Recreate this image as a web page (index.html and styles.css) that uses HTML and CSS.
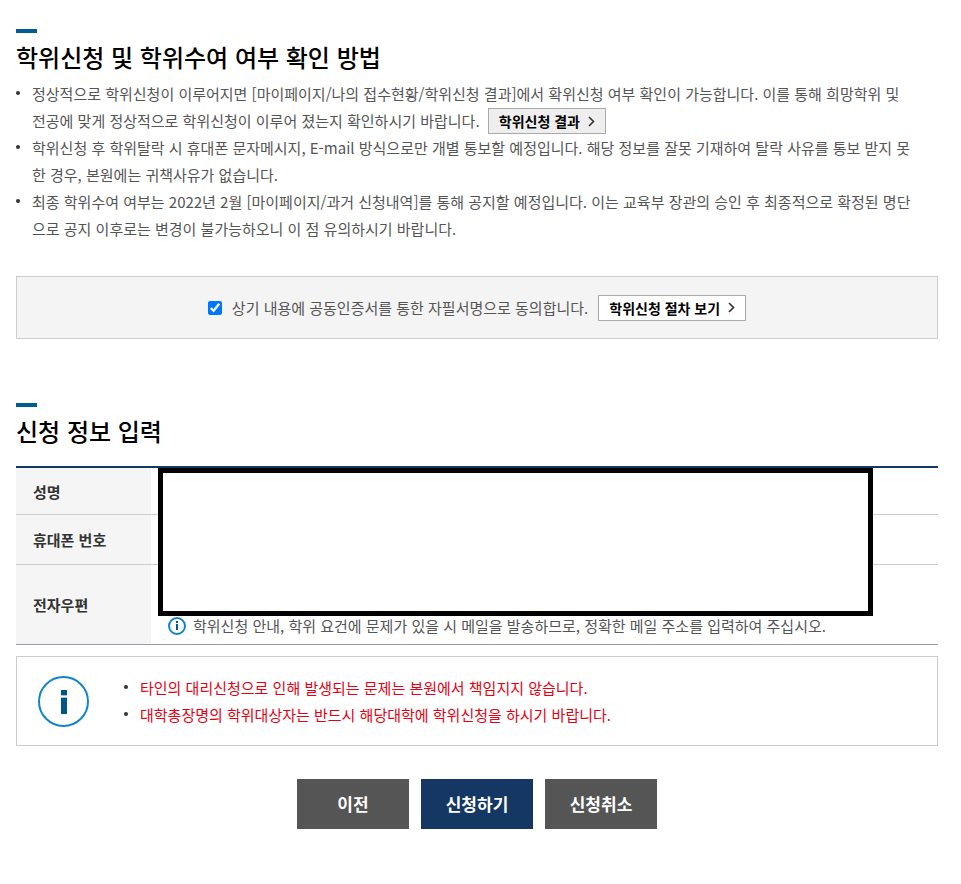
FILE: index.html
```html
<!DOCTYPE html>
<html lang="ko">
<head>
<meta charset="utf-8">
<meta name="viewport" content="width=device-width, initial-scale=1">
<title>학위신청</title>
<link rel="stylesheet" href="styles.css">
</head>
<body>
<main class="page">
  <section class="guide">
    <h2 class="title">학위신청 및 학위수여 여부 확인 방법</h2>
    <ul class="bullets">
      <li>정상적으로 학위신청이 이루어지면 [마이페이지/나의 접수현황/학위신청 결과]에서 확위신청 여부 확인이 가능합니다. 이를 통해 희망학위 및<br>전공에 맞게 정상적으로 학위신청이 이루어 졌는지 확인하시기 바랍니다.
        <a class="link-btn link-btn-gray" href="#">학위신청 결과<svg class="chevron" viewBox="0 0 7 11" aria-hidden="true"><path d="M1 1l4.5 4.5L1 10"/></svg></a></li>
      <li>학위신청 후 학위탈락 시 휴대폰 문자메시지, E-mail 방식으로만 개별 통보할 예정입니다. 해당 정보를 잘못 기재하여 탈락 사유를 통보 받지 못<br>한 경우, 본원에는 귀책사유가 없습니다.</li>
      <li>최종 학위수여 여부는 2022년 2월 [마이페이지/과거 신청내역]를 통해 공지할 예정입니다. 이는 교육부 장관의 승인 후 최종적으로 확정된 명단<br>으로 공지 이후로는 변경이 불가능하오니 이 점 유의하시기 바랍니다.</li>
    </ul>
  </section>

  <div class="agree">
    <input class="agree-check" type="checkbox" id="agree" checked>
    <label class="agree-label" for="agree">상기 내용에 공동인증서를 통한 자필서명으로 동의합니다.</label>
    <a class="link-btn" href="#">학위신청 절차 보기<svg class="chevron" viewBox="0 0 7 11" aria-hidden="true"><path d="M1 1l4.5 4.5L1 10"/></svg></a>
  </div>

  <section class="entry">
    <h2 class="title">신청 정보 입력</h2>
    <div class="table-wrap">
      <table class="info">
        <tbody>
          <tr class="row-name"><th scope="row">성명</th><td></td></tr>
          <tr class="row-phone"><th scope="row">휴대폰 번호</th><td></td></tr>
          <tr class="row-mail"><th scope="row">전자우편</th><td>
            <p class="hint"><svg class="hint-icon" viewBox="0 0 18 18" aria-hidden="true"><circle cx="9" cy="9" r="8"/><path d="M8 4h2v2H8zM8 7h2v6H8z"/></svg>학위신청 안내, 학위 요건에 문제가 있을 시 메일을 발송하므로, 정확한 메일 주소를 입력하여 주십시오.</p>
          </td></tr>
        </tbody>
      </table>
      <div class="mask"></div>
    </div>
    <div class="notice">
      <svg class="notice-icon" viewBox="0 0 51 51" aria-hidden="true"><circle cx="25.5" cy="25.5" r="24.5"/><path d="M23 14h6v5h-6zM23 22h6v16h-6z"/><path class="notice-gap" d="M23 19h6v1h-6zM23 21h6v1h-6z"/></svg>
      <ul class="bullets notice-list">
        <li>타인의 대리신청으로 인해 발생되는 문제는 본원에서 책임지지 않습니다.</li>
        <li>대학총장명의 학위대상자는 반드시 해당대학에 학위신청을 하시기 바랍니다.</li>
      </ul>
    </div>
  </section>

  <div class="actions">
    <button class="action" type="button">이전</button>
    <button class="action action-primary" type="button">신청하기</button>
    <button class="action" type="button">신청취소</button>
  </div>
</main>
</body>
</html>
```
FILE: styles.css
```css
* {
  box-sizing: border-box;
}

body {
  margin: 0;
  background: #fff;
  color: #555;
  font: 400 15px/27px "Noto Sans CJK KR", "Noto Sans", sans-serif;
}

.page {
  padding: 29px 23px 55px 16px;
}

.title {
  margin: 0;
  color: #000;
  font-size: 24px;
  font-weight: 500;
  line-height: 36px;
}

.title::before {
  content: "";
  display: block;
  width: 21px;
  height: 4px;
  margin-bottom: 6px;
  background: #005c92;
}

.bullets {
  margin: 0;
  padding: 0;
  list-style: none;
}

.bullets li {
  position: relative;
  padding-left: 16px;
}

.bullets li::before {
  content: "";
  position: absolute;
  top: 11px;
  left: 0;
  width: 4px;
  height: 4px;
  border-radius: 50%;
  background: #333;
}

.guide .bullets {
  margin-top: 5px;
}

.link-btn {
  display: inline-flex;
  align-items: center;
  gap: 8px;
  height: 26px;
  padding: 0 10px;
  border: 1px solid #aaa;
  background: #fff;
  color: #000;
  font-size: 14px;
  font-weight: 700;
  line-height: 24px;
  text-decoration: none;
}

.link-btn-gray {
  margin: 1px 0 0 4px;
  background: #eee;
  vertical-align: top;
}

.chevron {
  width: 7px;
  height: 11px;
  fill: none;
  stroke: #333;
  stroke-width: 1.6;
}

.agree {
  display: flex;
  align-items: center;
  justify-content: center;
  height: 63px;
  margin-top: 34px;
  border: 1px solid #ccc;
  background: #f4f4f4;
}

.agree-check {
  width: 14px;
  height: 14px;
  margin: 0 10px 0 0;
}

.agree-label {
  margin-right: 10px;
}

.entry {
  margin-top: 64px;
}

.table-wrap {
  position: relative;
  margin-top: 17px;
}

.info {
  width: 100%;
  border-top: 2px solid #143764;
  border-bottom: 1px solid #959ca8;
  border-spacing: 0;
  table-layout: fixed;
}

.info th,
.info td {
  padding: 0 17px;
  border-bottom: 1px solid #ccc;
}

.info th {
  width: 135px;
  background: #f5f5f5;
  color: #333;
  font-weight: 700;
  text-align: left;
}

.row-name {
  height: 47px;
}

.row-phone {
  height: 50px;
}

.row-mail {
  height: 79px;
}

.info .row-mail th,
.info .row-mail td {
  border-bottom: 0;
}

.info .row-mail td {
  vertical-align: bottom;
}

.hint {
  display: flex;
  align-items: center;
  gap: 7px;
  margin: 0 0 5px;
}

.hint-icon {
  flex: none;
  width: 18px;
  height: 18px;
  fill: #005c92;
}

.hint-icon circle {
  fill: none;
  stroke: #1284c7;
  stroke-width: 2;
}

.mask {
  position: absolute;
  top: 2px;
  right: 65px;
  left: 142px;
  height: 148px;
  border: 5px solid #000;
  background: #fff;
}

.notice {
  display: flex;
  align-items: center;
  gap: 35px;
  margin-top: 11px;
  padding: 17px 21px;
  border: 1px solid #ccc;
  line-height: 27px;
}

.notice-icon {
  flex: none;
  width: 51px;
  height: 51px;
  fill: #005689;
}

.notice-icon circle {
  fill: none;
  stroke: #1284c7;
  stroke-width: 2;
}

.notice-icon .notice-gap {
  fill: #9fc3d8;
}

.notice-list {
  color: #e60012;
}

.actions {
  display: flex;
  justify-content: center;
  gap: 12px;
  margin-top: 33px;
}

.action {
  width: 112px;
  height: 50px;
  padding: 0;
  border: 0;
  background: #555;
  color: #fff;
  font: 700 17px/24px "Noto Sans CJK KR", "Noto Sans", sans-serif;
}

.action-primary {
  background: #143764;
}
```
